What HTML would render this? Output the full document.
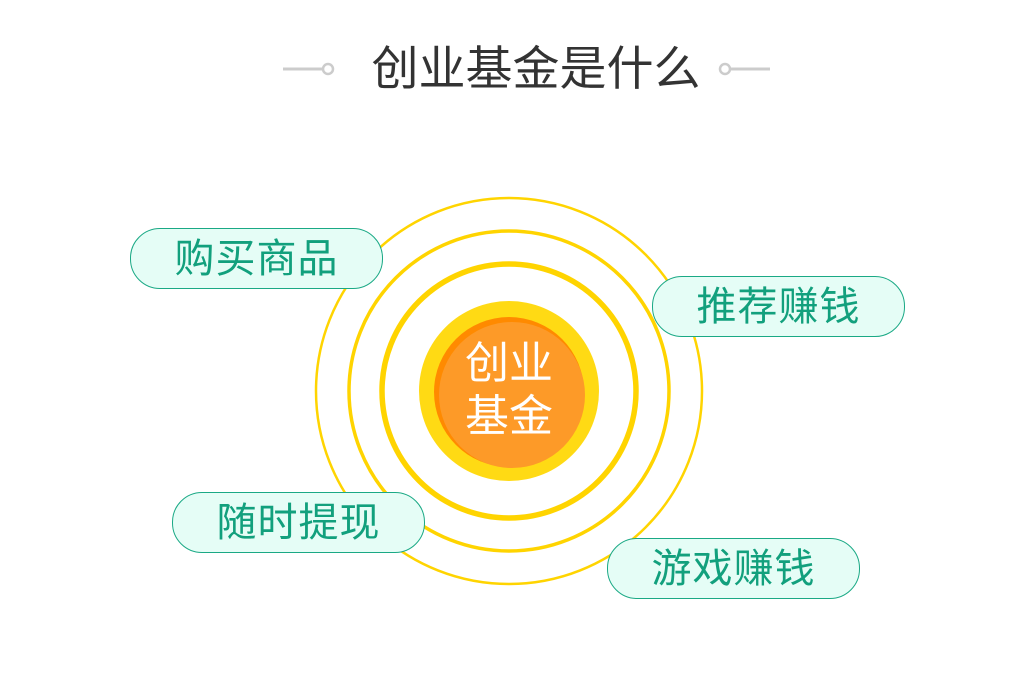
<!DOCTYPE html>
<html><head><meta charset="utf-8"><style>
html,body{margin:0;padding:0;background:#fff;width:1035px;height:689px;overflow:hidden;position:relative;font-family:"Liberation Sans","Noto Sans CJK SC",sans-serif}
.t{position:absolute;left:336px;top:36px;width:400px;text-align:center;font-size:47px;line-height:66px;color:#333;white-space:nowrap}
.p{position:absolute;width:251px;height:59px;border:1.5px solid #1aa985;border-radius:30px;background:#e5fdf6;color:#12a07d;font-size:40px;line-height:61px;text-align:center;letter-spacing:1px;white-space:nowrap}
.c{position:absolute;left:449px;top:337px;width:120px;text-align:center;color:#fff;font-size:44px;line-height:53px;white-space:nowrap}
</style></head><body>
<svg width="1035" height="689" style="position:absolute;left:0;top:0">
<line x1="283" y1="69" x2="322" y2="69" stroke="#ccc" stroke-width="3"/>
<circle cx="328" cy="69" r="5" fill="none" stroke="#ccc" stroke-width="2.5"/>
<circle cx="725" cy="69" r="5" fill="none" stroke="#ccc" stroke-width="2.5"/>
<line x1="731" y1="69" x2="770" y2="69" stroke="#ccc" stroke-width="3"/>
<circle cx="509" cy="391" r="193" fill="none" stroke="#ffd400" stroke-width="2.5"/>
<circle cx="509" cy="391" r="160" fill="none" stroke="#ffd400" stroke-width="3.5"/>
<circle cx="509" cy="391" r="127" fill="none" stroke="#ffd400" stroke-width="5.5"/>
<circle cx="509" cy="391" r="90" fill="#ffda14"/>
<circle cx="509" cy="392" r="75" fill="#ff8a00"/>
<circle cx="512" cy="395" r="73" fill="#fd9a28"/>
</svg>
<div class="t">创业基金是什么</div>
<div class="p" style="left:130px;top:228px">购买商品</div>
<div class="p" style="left:652px;top:276px">推荐赚钱</div>
<div class="p" style="left:172px;top:492px">随时提现</div>
<div class="p" style="left:607px;top:538px">游戏赚钱</div>
<div class="c">创业<br>基金</div>
</body></html>
